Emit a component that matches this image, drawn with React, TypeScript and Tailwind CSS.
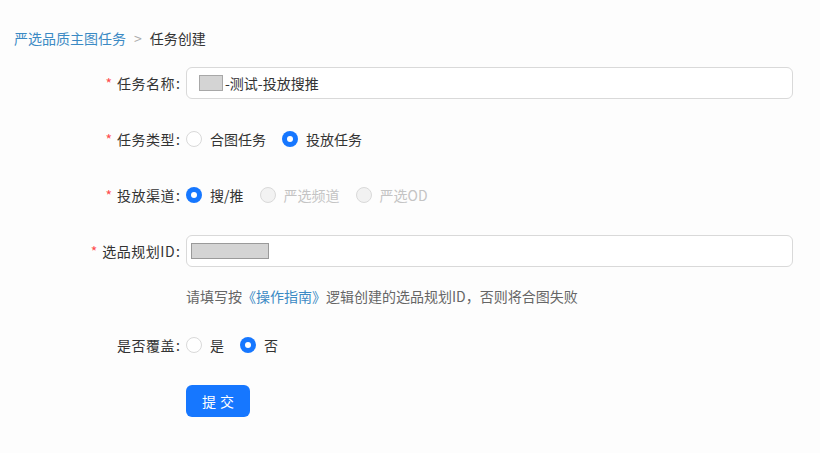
import React from "react";

const FONT = '"Noto Sans CJK SC", "Noto Sans", "Liberation Sans", sans-serif';

function Radio({ label, checked, disabled }: { label: string; checked?: boolean; disabled?: boolean }) {
  return (
    <label className="flex items-center mr-[8px]">
      {checked ? (
        <span className="w-[16px] h-[16px] rounded-full bg-[#1677ff] flex items-center justify-center">
          <span className="w-[6px] h-[6px] rounded-full bg-white" />
        </span>
      ) : (
        <span
          className={
            "w-[16px] h-[16px] rounded-full border border-[#d9d9d9] " +
            (disabled ? "bg-[#f2f2f2]" : "bg-white")
          }
        />
      )}
      <span className={"px-[8px] text-[14px] " + (disabled ? "text-[#c4c4c4]" : "text-[#333]")}>{label}</span>
    </label>
  );
}

function Label({ text, required }: { text: string; required?: boolean }) {
  return (
    <div className="w-[186px] shrink-0 flex justify-end items-center pr-[6px] text-[14px] text-[#333]">
      {required && <span className="text-[#ff4d4f] mr-[5px] text-[14px]">*</span>}
      <span className="tracking-[0.5px]">{text}</span>
      <span className="ml-[1px]">:</span>
    </div>
  );
}

export default function App() {
  return (
    <div className="w-[820px] h-[453px] bg-[#fdfdfd]" style={{ fontFamily: FONT }}>
      <div className="flex items-center pl-[14px] pt-[28px] h-[48px] text-[14px]">
        <span className="text-[#3b8ac4]">严选品质主图任务</span>
        <span className="text-[#aaa] mx-[8px]">&gt;</span>
        <span className="text-[#333]">任务创建</span>
      </div>

      <div className="flex flex-col pr-[27px]">
        <div className="flex items-center h-[32px] mt-[19px]">
          <Label text="任务名称" required />
          <div className="flex-1 h-[32px] rounded-[6px] border border-[#d9d9d9] bg-white flex items-center pl-[12px] text-[14px] text-[#333]">
            <span className="w-[24px] h-[16px] bg-[#d4d4d4] border border-[#a8a8a8] mr-[2px]" />
            <span>-测试-投放搜推</span>
          </div>
        </div>

        <div className="flex items-center h-[32px] mt-[24px]">
          <Label text="任务类型" required />
          <Radio label="合图任务" />
          <Radio label="投放任务" checked />
        </div>

        <div className="flex items-center h-[32px] mt-[24px]">
          <Label text="投放渠道" required />
          <Radio label="搜/推" checked />
          <Radio label="严选频道" disabled />
          <Radio label="严选OD" disabled />
        </div>

        <div className="flex items-center h-[32px] mt-[24px]">
          <Label text="选品规划ID" required />
          <div className="flex-1 h-[32px] rounded-[6px] border border-[#d9d9d9] bg-white flex items-center pl-[4px]">
            <span className="w-[78px] h-[16px] bg-[#d4d4d4] border border-[#9a9a9a]" />
          </div>
        </div>

        <div className="flex h-[22px] mt-[19px] text-[14px] text-[#666]">
          <div className="w-[186px] shrink-0" />
          <span>
            请填写按<span className="text-[#3b8ac4]">《操作指南》</span>逻辑创建的选品规划ID，否则将合图失败
          </span>
        </div>

        <div className="flex items-center h-[32px] mt-[21px]">
          <Label text="是否覆盖" />
          <Radio label="是" />
          <Radio label="否" checked />
        </div>

        <div className="flex items-center mt-[24px]">
          <div className="w-[186px] shrink-0" />
          <button className="w-[64px] h-[32px] rounded-[6px] bg-[#1677ff] text-white text-[14px] tracking-[4px] pl-[4px]">
            提交
          </button>
        </div>
      </div>
    </div>
  );
}
